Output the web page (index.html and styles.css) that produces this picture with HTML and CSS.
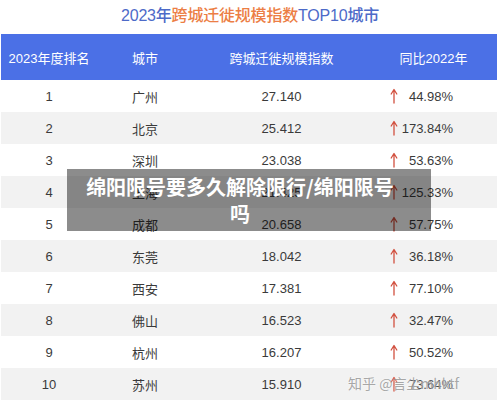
FILE: index.html
```html
<!DOCTYPE html>
<html lang="zh">
<head>
<meta charset="utf-8">
<link rel="stylesheet" href="styles.css">
</head>
<body>
<div class="page">
  <h1 class="title">2023年<span class="hl">跨城迁徙规模指数</span>TOP10城市</h1>
  <div class="table">
    <div class="row head">
      <div class="c rank">2023年度排名</div>
      <div class="c city">城市</div>
      <div class="c idx">跨城迁徙规模指数</div>
      <div class="c pct-h">同比2022年</div>
    </div>
    <div class="row"><div class="c rank">1</div><div class="c city">广州</div><div class="c idx">27.140</div><div class="c pct"><svg class="arr" viewBox="0 0 8 16"><path d="M4 15V2M1.2 6L4 1.5 6.8 6"/></svg><span>44.98%</span></div></div>
    <div class="row alt"><div class="c rank">2</div><div class="c city">北京</div><div class="c idx">25.412</div><div class="c pct"><svg class="arr" viewBox="0 0 8 16"><path d="M4 15V2M1.2 6L4 1.5 6.8 6"/></svg><span>173.84%</span></div></div>
    <div class="row"><div class="c rank">3</div><div class="c city">深圳</div><div class="c idx">23.038</div><div class="c pct"><svg class="arr" viewBox="0 0 8 16"><path d="M4 15V2M1.2 6L4 1.5 6.8 6"/></svg><span>53.63%</span></div></div>
    <div class="row alt"><div class="c rank">4</div><div class="c city">上海</div><div class="c idx">21.425</div><div class="c pct"><svg class="arr" viewBox="0 0 8 16"><path d="M4 15V2M1.2 6L4 1.5 6.8 6"/></svg><span>125.33%</span></div></div>
    <div class="row"><div class="c rank">5</div><div class="c city">成都</div><div class="c idx">20.658</div><div class="c pct"><svg class="arr" viewBox="0 0 8 16"><path d="M4 15V2M1.2 6L4 1.5 6.8 6"/></svg><span>57.75%</span></div></div>
    <div class="row alt"><div class="c rank">6</div><div class="c city">东莞</div><div class="c idx">18.042</div><div class="c pct"><svg class="arr" viewBox="0 0 8 16"><path d="M4 15V2M1.2 6L4 1.5 6.8 6"/></svg><span>36.18%</span></div></div>
    <div class="row"><div class="c rank">7</div><div class="c city">西安</div><div class="c idx">17.381</div><div class="c pct"><svg class="arr" viewBox="0 0 8 16"><path d="M4 15V2M1.2 6L4 1.5 6.8 6"/></svg><span>77.10%</span></div></div>
    <div class="row alt"><div class="c rank">8</div><div class="c city">佛山</div><div class="c idx">16.523</div><div class="c pct"><svg class="arr" viewBox="0 0 8 16"><path d="M4 15V2M1.2 6L4 1.5 6.8 6"/></svg><span>32.47%</span></div></div>
    <div class="row"><div class="c rank">9</div><div class="c city">杭州</div><div class="c idx">16.207</div><div class="c pct"><svg class="arr" viewBox="0 0 8 16"><path d="M4 15V2M1.2 6L4 1.5 6.8 6"/></svg><span>50.52%</span></div></div>
    <div class="row alt"><div class="c rank">10</div><div class="c city">苏州</div><div class="c idx">15.910</div><div class="c pct"><svg class="arr" viewBox="0 0 8 16"><path d="M4 15V2M1.2 6L4 1.5 6.8 6"/></svg><span>73.64%</span></div></div>
  </div>
  <div class="watermark">知乎 @言尘mhktf</div>
  <div class="overlay">绵阳限号要多久解除限行/绵阳限号<br>吗</div>
</div>
</body>
</html>
```
FILE: styles.css
```css
html, body {
  margin: 0;
  padding: 0;
  background: #fff;
}
body {
  font-family: "Liberation Sans", "Noto Sans CJK SC", sans-serif;
  color: #333;
}
.page {
  position: relative;
  width: 500px;
  height: 400px;
  overflow: hidden;
}
.title {
  margin: 0;
  height: 34px;
  display: flex;
  align-items: center;
  justify-content: center;
  padding-bottom: 6px;
  box-sizing: border-box;
  font-size: 16px;
  font-weight: 500;
  color: #4d6ac8;
  letter-spacing: -0.2px;
}
.title .hl {
  color: #ec7e45;
}
.table {
  margin: 0 3px 0 1px;
  display: flex;
  flex-direction: column;
}
.row {
  display: grid;
  grid-template-columns: 96px 96px 177px 1fr;
  height: 32px;
  align-items: center;
  font-size: 13px;
  color: #3a3a3a;
}
.row.alt {
  background: #f2f2f2;
}
.row.head {
  height: 46px;
  background: #4b70e6;
  color: #fff;
  font-size: 13px;
}
.c {
  text-align: center;
  white-space: nowrap;
}
.pct {
  display: flex;
  align-items: center;
  justify-content: space-between;
  padding: 0 44px 0 20px;
}
.arr {
  width: 8px;
  height: 16px;
  fill: none;
  stroke: #d2503f;
  stroke-width: 1.3;
  stroke-linecap: round;
  stroke-linejoin: round;
}
.overlay {
  position: absolute;
  left: 67px;
  top: 169px;
  width: 364px;
  height: 62px;
  box-sizing: border-box;
  padding: 4px 18px 4px 0;
  background: rgba(0, 0, 0, 0.45);
  color: #fff;
  font-family: "Noto Sans CJK SC", sans-serif;
  font-weight: 700;
  font-size: 20px;
  line-height: 27px;
  text-align: center;
}
.watermark {
  position: absolute;
  left: 348px;
  top: 373px;
  font-family: "Noto Sans CJK SC", sans-serif;
  font-size: 14px;
  color: rgba(140, 140, 140, 0.75);
  text-shadow: 0 0 2px #fff;
  white-space: nowrap;
}
```
